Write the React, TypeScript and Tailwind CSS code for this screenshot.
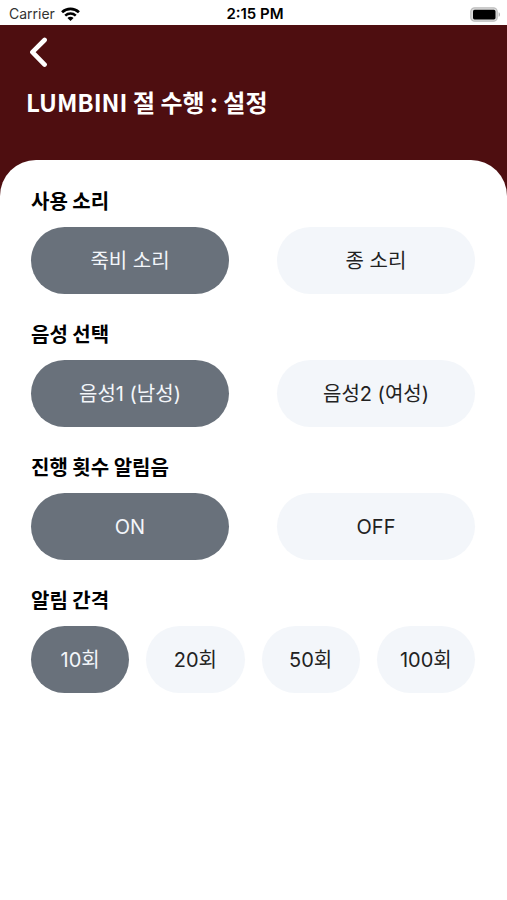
import React, { useState } from "react";

const sections = [
  { id: "sound", title: "사용 소리", options: ["죽비 소리", "종 소리"] },
  { id: "voice", title: "음성 선택", options: ["음성1 (남성)", "음성2 (여성)"] },
  { id: "alert", title: "진행 횟수 알림음", options: ["ON", "OFF"] },
  { id: "interval", title: "알림 간격", options: ["10회", "20회", "50회", "100회"] },
];

const StatusBar = () => {
  return (
    <div className="grid grid-cols-3 items-center h-[25px] pl-[9px] pr-[6px] pt-[3px] bg-white text-black">
      <div className="flex items-center gap-[6px]">
        <span className="text-[14px] leading-[20px] text-[#333333]">Carrier</span>
        <svg width="19" height="15" viewBox="0 0 18 14" fill="none" aria-hidden="true">
          <path d="M1 4.8C5.6 .5 12.4 .5 17 4.8" stroke="currentColor" strokeWidth="2.6" />
          <path d="M4 8C6.9 5.3 11.1 5.3 14 8" stroke="currentColor" strokeWidth="2.4" />
          <path d="M6.1 10.3C7.8 8.8 10.2 8.8 11.9 10.3L9 13.2Z" fill="currentColor" />
        </svg>
      </div>
      <span className="text-center text-[15px] leading-[20px] font-semibold">2:15 PM</span>
      <svg className="justify-self-end" width="31" height="15" viewBox="0 0 31 15" aria-hidden="true">
        <rect x=".8" y=".8" width="26.4" height="13.4" rx="3.8" fill="#dcdcdc" stroke="#bdbdbd" strokeWidth="1.2" />
        <rect x="3" y="2.8" width="22.5" height="9.6" rx="1.6" fill="black" />
        <path d="M28.6 5.2C30.5 5.8 30.5 9.2 28.6 9.8Z" fill="#b5b5b5" />
      </svg>
    </div>
  );
};

const App = () => {
  const [selected, setSelected] = useState<Record<string, string>>({
    sound: "죽비 소리",
    voice: "음성1 (남성)",
    alert: "ON",
    interval: "10회",
  });

  return (
    <div className="min-h-screen flex flex-col bg-white font-[Inter,'Noto_Sans_CJK_KR',sans-serif]">
      <StatusBar />
      <div className="flex-1 flex flex-col bg-[#4e0e10]">
        <header className="h-[135px] pt-[12px] pl-[26px]">
          <button type="button" aria-label="뒤로" className="block pl-[3px] text-white">
            <svg width="20" height="31" viewBox="0 0 20 31" fill="none" aria-hidden="true">
              <path
                d="M15.6 3L3.4 15.2L15.6 27.6"
                stroke="currentColor"
                strokeWidth="4.6"
                strokeLinecap="round"
                strokeLinejoin="round"
              />
            </svg>
          </button>
          <h1 className="mt-[16px] text-white text-[24px] leading-[36px] font-bold font-['Noto_Sans_CJK_KR',sans-serif]">
            LUMBINI 절 수행 : 설정
          </h1>
        </header>
        <main className="flex-1 flex flex-col gap-[25px] rounded-t-[36px] bg-white pt-[26px] pb-8 pl-[31px] pr-[32px]">
          {sections.map((section) => (
            <section key={section.id} aria-labelledby={section.id}>
              <h2
                id={section.id}
                className="mb-[11px] text-black text-[20px] leading-[30px] font-bold font-['Noto_Sans_CJK_KR',sans-serif]"
              >
                {section.title}
              </h2>
              <div className={section.options.length > 2 ? "flex gap-[17px]" : "flex gap-[48px]"}>
                {section.options.map((option) => (
                  <button
                    key={option}
                    type="button"
                    aria-pressed={selected[section.id] === option}
                    onClick={() => setSelected({ ...selected, [section.id]: option })}
                    className={`flex-1 h-[67px] rounded-full text-[20px] leading-[30px] whitespace-nowrap ${
                      selected[section.id] === option
                        ? "bg-[#69717b] text-[#f3f6fa]"
                        : "bg-[#f3f6fa] text-[#222222]"
                    }`}
                  >
                    {option}
                  </button>
                ))}
              </div>
            </section>
          ))}
        </main>
      </div>
    </div>
  );
};

export default App;
